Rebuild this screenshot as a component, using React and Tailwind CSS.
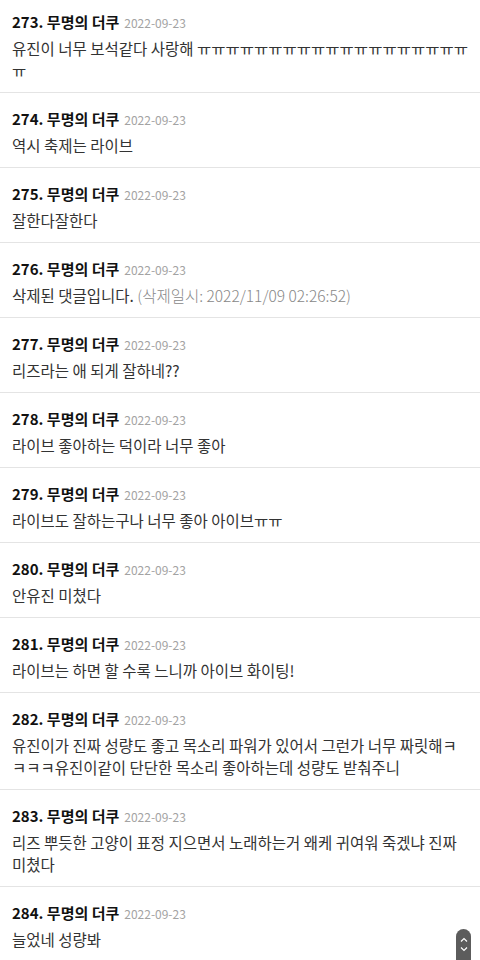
import React from 'react';

const comments = [
    { no: 273, body: '유진이 너무 보석같다 사랑해 ㅠㅠㅠㅠㅠㅠㅠㅠㅠㅠㅠㅠㅠㅠㅠㅠㅠㅠㅠㅠ' },
    { no: 274, body: '역시 축제는 라이브' },
    { no: 275, body: '잘한다잘한다' },
    { no: 276, body: '삭제된 댓글입니다.', deleted: '(삭제일시: 2022/11/09 02:26:52)' },
    { no: 277, body: '리즈라는 애 되게 잘하네??' },
    { no: 278, body: '라이브 좋아하는 덕이라 너무 좋아' },
    { no: 279, body: '라이브도 잘하는구나 너무 좋아 아이브ㅠㅠ' },
    { no: 280, body: '안유진 미쳤다' },
    { no: 281, body: '라이브는 하면 할 수록 느니까 아이브 화이팅!' },
    { no: 282, body: '유진이가 진짜 성량도 좋고 목소리 파워가 있어서 그런가 너무 짜릿해ㅋㅋㅋㅋ유진이같이 단단한 목소리 좋아하는데 성량도 받춰주니' },
    { no: 283, body: '리즈 뿌듯한 고양이 표정 지으면서 노래하는거 왜케 귀여워 죽겠냐 진짜 미쳤다' },
    { no: 284, body: '늘었네 성량봐' },
];

const Comment = ({ c }) => (
    <li className="px-3 pt-[15px] pb-[11px] border-b border-[#e4e4e4]">
        <div className="h-[20px] leading-[20px] whitespace-nowrap">
            <span className="text-[15px] font-bold text-[#111]">{c.no}. 무명의 더쿠</span>
            <span className="ml-[5px] text-[12px] text-[#a3a3a3]">2022-09-23</span>
        </div>
        <p className="mt-[6px] text-[15.5px] leading-[22px] text-[#333]">
            {c.body}
            {c.deleted && <span className="text-[#888] font-light"> {c.deleted}</span>}
        </p>
    </li>
);

export default function App() {
    return (
        <div className="relative w-[480px] h-[960px] overflow-hidden bg-white" style={{ fontFamily: '"Noto Sans CJK KR", "Noto Sans", sans-serif' }}>
            <ul className="-mt-1">
                {comments.map(c => <Comment key={c.no} c={c} />)}
            </ul>

            {/* scroll buttons */}
            <div className="absolute right-[9px] top-[929px] w-[15px] h-[40px] rounded-t-full bg-[#5c5c5c] flex flex-col items-center pt-[8px] gap-[5px]">
                <svg width="8" height="5" viewBox="0 0 8 5" fill="none" stroke="#fff" strokeWidth="1.2"><path d="M1 4.5 L4 1.5 L7 4.5" /></svg>
                <svg width="8" height="5" viewBox="0 0 8 5" fill="none" stroke="#fff" strokeWidth="1.2"><path d="M1 0.5 L4 3.5 L7 0.5" /></svg>
            </div>
        </div>
    );
}
